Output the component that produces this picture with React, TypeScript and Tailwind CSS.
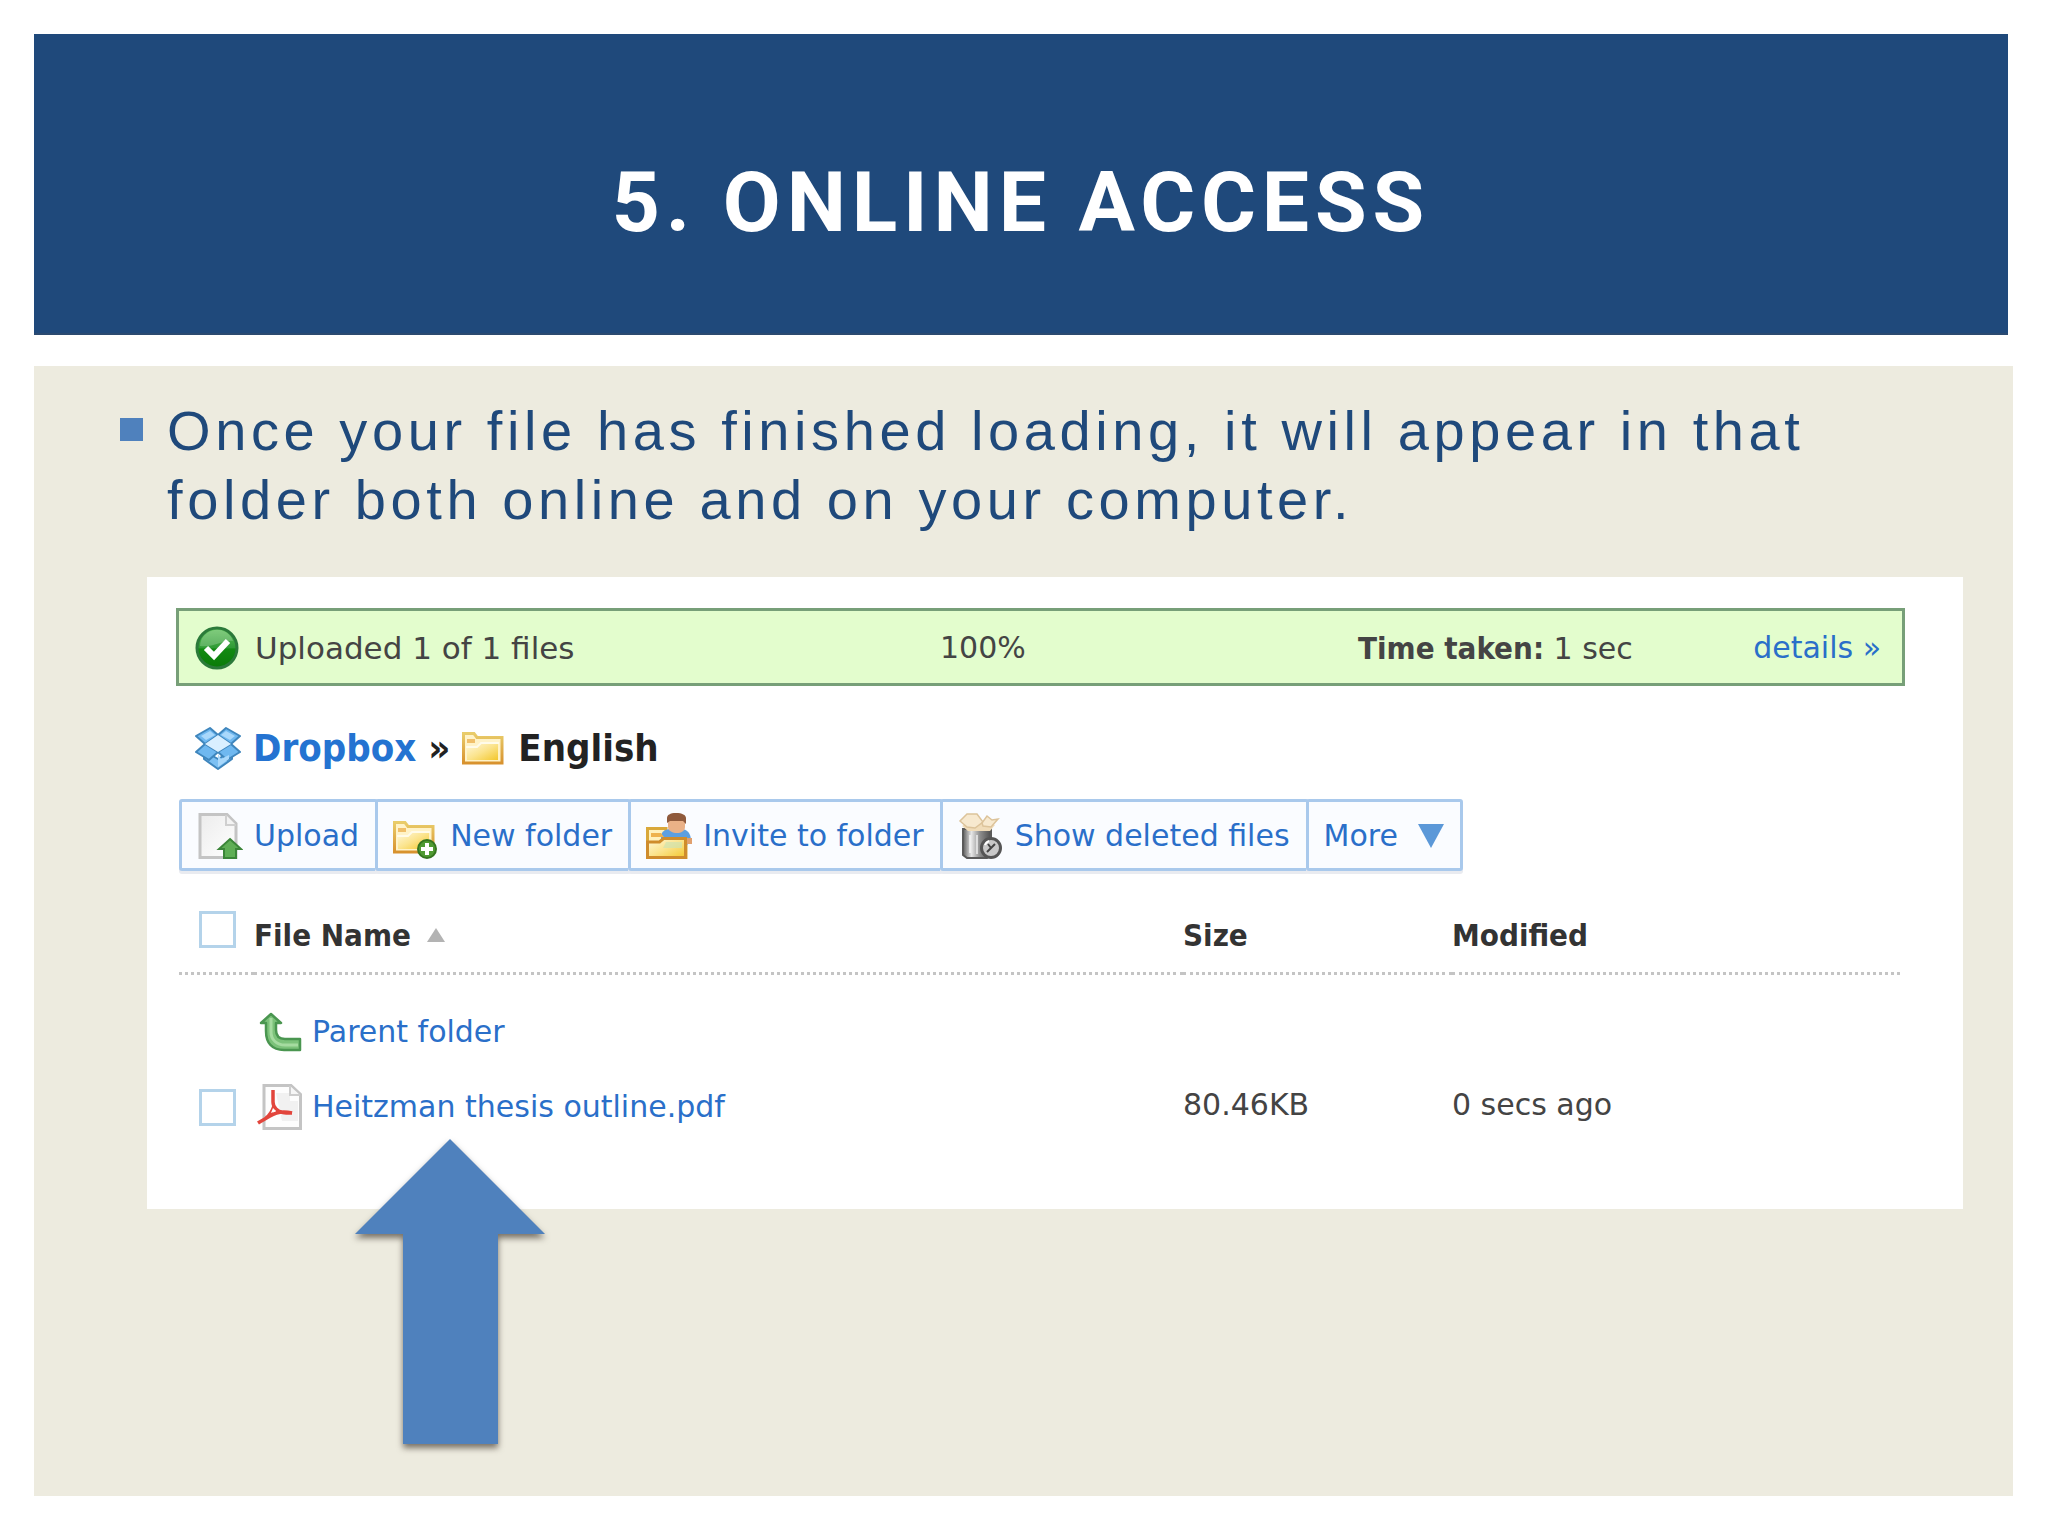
import type { ReactNode } from "react";

const iconBox = "h-[46px] w-[46px] shrink-0";

function CheckIcon() {
  return (
    <svg viewBox="0 0 44 44" className="h-[44px] w-[44px] shrink-0" aria-hidden="true">
      <defs>
        <linearGradient id="okFill" x1="0" y1="0" x2="0" y2="1">
          <stop offset="0" stopColor="#5fc05a" />
          <stop offset="0.5" stopColor="#2f9a35" />
          <stop offset="0.52" stopColor="#128a12" />
          <stop offset="1" stopColor="#0a7a08" />
        </linearGradient>
      </defs>
      <circle cx="22" cy="22" r="20" fill="url(#okFill)" stroke="#2b7a3a" strokeWidth="3" />
      <path d="M5 20a17 17 0 0 1 33-5C30 13 18 22 5 20z" fill="#fff" opacity="0.22" />
      <path d="M11 22l8 8 14-15" fill="none" stroke="#fff" strokeWidth="6" />
    </svg>
  );
}

function DropboxIcon() {
  return (
    <svg viewBox="0 0 46 44" className="h-[44px] w-[46px] shrink-0" aria-hidden="true">
      <g stroke="#3f86bd" strokeWidth="2" strokeLinejoin="round">
        <path d="M9 25l14 8 14-8v8l-14 10L9 33z" fill="#7cc0f3" />
        <path d="M15 2L1 10l9 8 13-9z" fill="#6fb8f0" />
        <path d="M31 2l14 8-9 8-13-9z" fill="#6fb8f0" />
        <path d="M10 18L1 26l13 8 9-8z" fill="#6fb8f0" />
        <path d="M36 18l9 8-13 8-9-8z" fill="#6fb8f0" />
      </g>
      <path d="M23 9l13 9-13 8-13-8z" fill="#d9efff" />
      <path d="M15 5l-9 5 5 4 9-5z" fill="#a9d8fb" />
      <path d="M31 5l9 5-5 4-9-5z" fill="#a9d8fb" />
      <path d="M23 28v13l11-8v-4l-8 4z" fill="#a9d8fb" />
    </svg>
  );
}

function SharedGradients() {
  return (
    <svg width="0" height="0" className="absolute" aria-hidden="true">
      <defs>
        <linearGradient id="folderFill" x1="0" y1="0" x2="1" y2="1">
          <stop offset="0" stopColor="#fff8dc" />
          <stop offset="0.5" stopColor="#fbe48e" />
          <stop offset="1" stopColor="#f3c72c" />
        </linearGradient>
        <linearGradient id="folderEdge" x1="0" y1="0" x2="0" y2="1">
          <stop offset="0" stopColor="#e9cc6a" />
          <stop offset="1" stopColor="#d8922e" />
        </linearGradient>
        <linearGradient id="pageFill" x1="0" y1="0" x2="1" y2="1">
          <stop offset="0" stopColor="#ececec" />
          <stop offset="1" stopColor="#ffffff" />
        </linearGradient>
        <linearGradient id="canFill" x1="0" y1="0" x2="1" y2="0">
          <stop offset="0" stopColor="#5c5c5c" />
          <stop offset="0.3" stopColor="#e6e6e6" />
          <stop offset="0.6" stopColor="#8e8e8e" />
          <stop offset="1" stopColor="#4e4e4e" />
        </linearGradient>
      </defs>
    </svg>
  );
}

function FolderShape() {
  return (
    <>
      <path d="M1.500 1.500H12l3 4h25V31H1.500z" fill="#fff3c8" stroke="url(#folderEdge)" strokeWidth="3" />
      <path d="M5 7h8v4H5z" fill="#f0bf6a" />
      <path d="M5 14h10l3-3h18v17H5z" fill="url(#folderFill)" />
      <path d="M4 15h11l4-4h18" fill="none" stroke="#fffbe9" strokeWidth="2" />
    </>
  );
}

function FolderIcon() {
  return (
    <svg viewBox="0 0 42 33" className="h-[33px] w-[42px] shrink-0" aria-hidden="true">
      <FolderShape />
    </svg>
  );
}

function UploadIcon() {
  return (
    <svg viewBox="0 0 46 46" className={iconBox} aria-hidden="true">
      <path d="M3 1.500h27l9 9V44.500H3z" fill="url(#pageFill)" stroke="#c4c4c4" strokeWidth="3" />
      <path d="M29 2v10h10" fill="#f3f3f3" stroke="#cfcfcf" strokeWidth="2" />
      <path d="M33 26l11 10h-5v9H27v-9h-5z" fill="#5fae55" stroke="#3b8538" strokeWidth="2" />
    </svg>
  );
}

function NewFolderIcon() {
  return (
    <svg viewBox="0 0 46 46" className={iconBox} aria-hidden="true">
      <g transform="translate(0 8)">
        <FolderShape />
      </g>
      <circle cx="34" cy="36" r="9" fill="#4f9a32" stroke="#35751f" strokeWidth="2" />
      <path d="M34 30v12M28 36h12" stroke="#fff" strokeWidth="4" />
    </svg>
  );
}

function InviteIcon() {
  return (
    <svg viewBox="0 0 46 46" className={iconBox} aria-hidden="true">
      <path d="M1.500 15.500H20V24h20v20.500H1.500z" fill="#fff1bd" stroke="#d9a83a" strokeWidth="3" />
      <path d="M15 24c0-6 5-8 10-8h10c6 0 10 4 10 12l-4 4H15z" fill="#5d9fe0" />
      <path d="M41 25h5v6h-5z" fill="#e0a06e" />
      <path d="M22 6h17v8c0 4-4 6-8 6s-9-2-9-6z" fill="#eab187" />
      <path d="M21 10V5c0-3 3-5 9-5s10 2 10 5v6l-3-3H24z" fill="#8f5a3c" />
      <path d="M5 20h10l3 4H5z" fill="#eeb24e" />
      <path d="M1.500 29h12l4-3.500h22v19h-38z" fill="url(#folderFill)" stroke="#cf8c2c" strokeWidth="3" />
      <path d="M20 29h16v6H17z" fill="#cfe3b0" opacity="0.7" />
    </svg>
  );
}

function TrashIcon() {
  return (
    <svg viewBox="0 0 46 46" className={iconBox} aria-hidden="true">
      <path d="M5 16h28v26l-4 3H9l-4-3z" fill="url(#canFill)" stroke="#5a5a5a" strokeWidth="2" />
      <path d="M12 22v18M19 22v19" stroke="#fff" strokeWidth="2" opacity="0.6" />
      <path d="M4 13l6 5h22l5-6-10-4H12z" fill="#f0dcb9" />
      <path d="M9 1h10l6 8-8 6-8-1-7-6z" fill="#f7e9cf" stroke="#dcc39a" strokeWidth="1.500" />
      <path d="M24 10l5-7 5 4 6-1-7 8-8-1z" fill="#f7e9cf" stroke="#dcc39a" strokeWidth="1.500" />
      <circle cx="33" cy="35" r="9.500" fill="#c9c9c9" stroke="#555" strokeWidth="3" />
      <path d="M29 39l8-8M30 31l3 4" stroke="#444" strokeWidth="2" />
      <path d="M27 32a7 7 0 0 1 4-4" stroke="#fff" strokeWidth="2" fill="none" />
    </svg>
  );
}

function ParentIcon() {
  return (
    <svg viewBox="0 0 46 46" className={iconBox} aria-hidden="true">
      <path
        d="M15 5l10 9h-5v7c0 6 3 9 9 9h15v11H28C16 41 10 34 10 22v-8H5z"
        fill="#7cc27a"
        stroke="#4a9650"
        strokeWidth="2.500"
        strokeLinejoin="round"
      />
      <path d="M15 9v14c0 8 6 13 14 13h13" fill="none" stroke="#a5dba0" strokeWidth="3" />
    </svg>
  );
}

function PdfIcon() {
  return (
    <svg viewBox="0 0 46 46" className={iconBox} aria-hidden="true">
      <path d="M8 1.500h27l9.500 9V44.500H8z" fill="#fdfdfd" stroke="#c4c4c4" strokeWidth="3" />
      <path d="M20 9h14v8h8v20H26z" fill="#f1f1f1" />
      <path d="M34 2v9h10" fill="#f6f6f6" stroke="#cdcdcd" strokeWidth="2" />
      <path
        d="M17 6v12c0 3 1 5 3 7 4 4 9 4 16 4M18 22c-2 6-4 9-8 12M36 29c-8-2-16-1-22 3-5 3-9 5-12 7"
        fill="none"
        stroke="#e2453c"
        strokeWidth="3.500"
      />
      <path d="M17 24l3 3-5 2z" fill="#fff" />
    </svg>
  );
}

function ToolButton({ icon, children }: { icon?: ReactNode; children: ReactNode }) {
  return (
    <button
      type="button"
      className="-ml-[3px] flex h-[72px] items-center gap-[11px] rounded-[3px] border-[3px] border-[#a9c9ec] bg-[#fafcff] pt-[2px] pr-4 pl-[15px] text-[#2a6fc9] shadow-[0_3px_0_#e9ebf0]"
    >
      {icon}
      {children}
    </button>
  );
}

function TickBox({ label }: { label: string }) {
  return (
    <input
      type="checkbox"
      aria-label={label}
      className="block h-[37px] w-[37px] appearance-none border-[3px] border-[#b4d3ea] bg-white"
    />
  );
}

export default function App() {
  return (
    <div className="flex min-h-screen flex-col gap-[31px] bg-white pt-[34px] pr-[35px] pb-[40px] pl-[34px]">
      <header className="mr-[5px] flex h-[301px] items-center justify-center border-b-2 border-[#2b4a70] bg-[#1f497b] pt-[38px]">
        <h1 className="font-[Roboto,sans-serif] text-[84px] leading-[100px] font-bold tracking-[0.07em] text-white">
          5. ONLINE ACCESS
        </h1>
      </header>

      <main className="flex-1 bg-[#edebdf] pt-[30px] pr-[50px] pl-[86px]">
        <ul className="font-['Liberation_Sans',Arial,sans-serif] text-[56px] leading-[69px] tracking-[0.082em] text-[#1f497b]">
          <li className="flex gap-[24px]">
            <span className="mt-[22px] h-[23px] w-[23px] shrink-0 bg-[#4f81bd]" />
            <span>
              Once your file has finished loading, it will appear in that
              <br />
              folder both online and on your computer.
            </span>
          </li>
        </ul>

        <section className="relative mt-[43px] ml-[27px] bg-white pt-[31px] pr-[58px] pb-[64px] pl-[29px] font-['DejaVu_Sans',sans-serif] text-[30px] leading-[40px] text-[#444444]">
          <SharedGradients />
          <div className="grid h-[78px] grid-cols-[745fr_418fr_523fr] items-center border-[3px] border-[#779f78] bg-[#e3fdcd] pt-[2px] pr-[21px] pl-4">
            <div className="flex items-center gap-4 text-[31px]">
              <CheckIcon />
              <span>Uploaded 1 of 1 files</span>
            </div>
            <span>100%</span>
            <div className="flex justify-between">
              <span>
                <b className="font-['DejaVu_Sans_Condensed','DejaVu_Sans',sans-serif] text-[31px]">Time taken:</b> 1 sec
              </span>
              <a href="#details" className="text-[#2a6fc9]">
                details »
              </a>
            </div>
          </div>

          <nav className="mt-[38px] ml-[19px] flex h-[48px] items-center font-['DejaVu_Sans_Condensed','DejaVu_Sans',sans-serif] text-[38px] font-bold text-[#222222]">
            <DropboxIcon />
            <a href="#dropbox" className="ml-3 text-[#2473d1]">
              Dropbox
            </a>
            <span className="mx-3 text-[38px]">»</span>
            <FolderIcon />
            <span className="ml-[14px]">English</span>
          </nav>

          <div className="mt-[27px] ml-[6px] flex">
            <ToolButton icon={<UploadIcon />}>Upload</ToolButton>
            <ToolButton icon={<NewFolderIcon />}>New folder</ToolButton>
            <ToolButton icon={<InviteIcon />}>Invite to folder</ToolButton>
            <ToolButton icon={<TrashIcon />}>Show deleted files</ToolButton>
            <ToolButton>
              More
              <svg viewBox="0 0 26 24" className="ml-[9px] h-[24px] w-[26px]" aria-hidden="true">
                <path d="M0 0h26L13 24z" fill="#5b98d8" />
              </svg>
            </ToolButton>
          </div>

          <div className="mt-[28px] mr-[5px] ml-[3px]">
            <table className="w-full table-fixed border-collapse text-left">
              <colgroup>
                <col className="w-[75px]" />
                <col />
                <col className="w-[269px]" />
                <col className="w-[448px]" />
              </colgroup>
              <thead>
                <tr className="h-[74px] font-['DejaVu_Sans_Condensed','DejaVu_Sans',sans-serif] text-[31px] text-[#333333]">
                  <th className="pb-3 pl-[20px]">
                    <TickBox label="Select all files" />
                  </th>
                  <th>
                    <div className="flex items-center gap-4">
                      File Name
                      <svg viewBox="0 0 18 14" className="h-[14px] w-[18px]" aria-hidden="true">
                        <path d="M9 0l9 14H0z" fill="#b3b3b3" />
                      </svg>
                    </div>
                  </th>
                  <th>Size</th>
                  <th>Modified</th>
                </tr>
              </thead>
              <tbody>
                <tr className="h-[96px]">
                  <td colSpan={4} className="border-t-[3px] border-dotted border-[#c4c4c4] pt-5 pl-[77px]">
                    <a href="#parent" className="flex items-center gap-[10px] text-[#2a6fc9]">
                      <ParentIcon />
                      Parent folder
                    </a>
                  </td>
                </tr>
                <tr className="h-[76px]">
                  <td className="pl-[20px]">
                    <TickBox label="Select Heitzman thesis outline.pdf" />
                  </td>
                  <td className="pl-[2px]">
                    <a href="#file" className="flex items-center gap-[10px] text-[#2a6fc9]">
                      <PdfIcon />
                      Heitzman thesis outline.pdf
                    </a>
                  </td>
                  <td className="pb-1">80.46KB</td>
                  <td className="pb-1">0 secs ago</td>
                </tr>
              </tbody>
            </table>
          </div>

          <svg
            viewBox="0 0 190 305"
            className="absolute top-[562px] left-[208px] h-[305px] w-[190px] overflow-visible drop-shadow-[0_4px_3px_rgba(40,30,20,0.6)]"
            aria-hidden="true"
          >
            <path d="M95 0l95 95h-47v210H48V95H0z" fill="#4f81bd" />
          </svg>
        </section>
      </main>
    </div>
  );
}
